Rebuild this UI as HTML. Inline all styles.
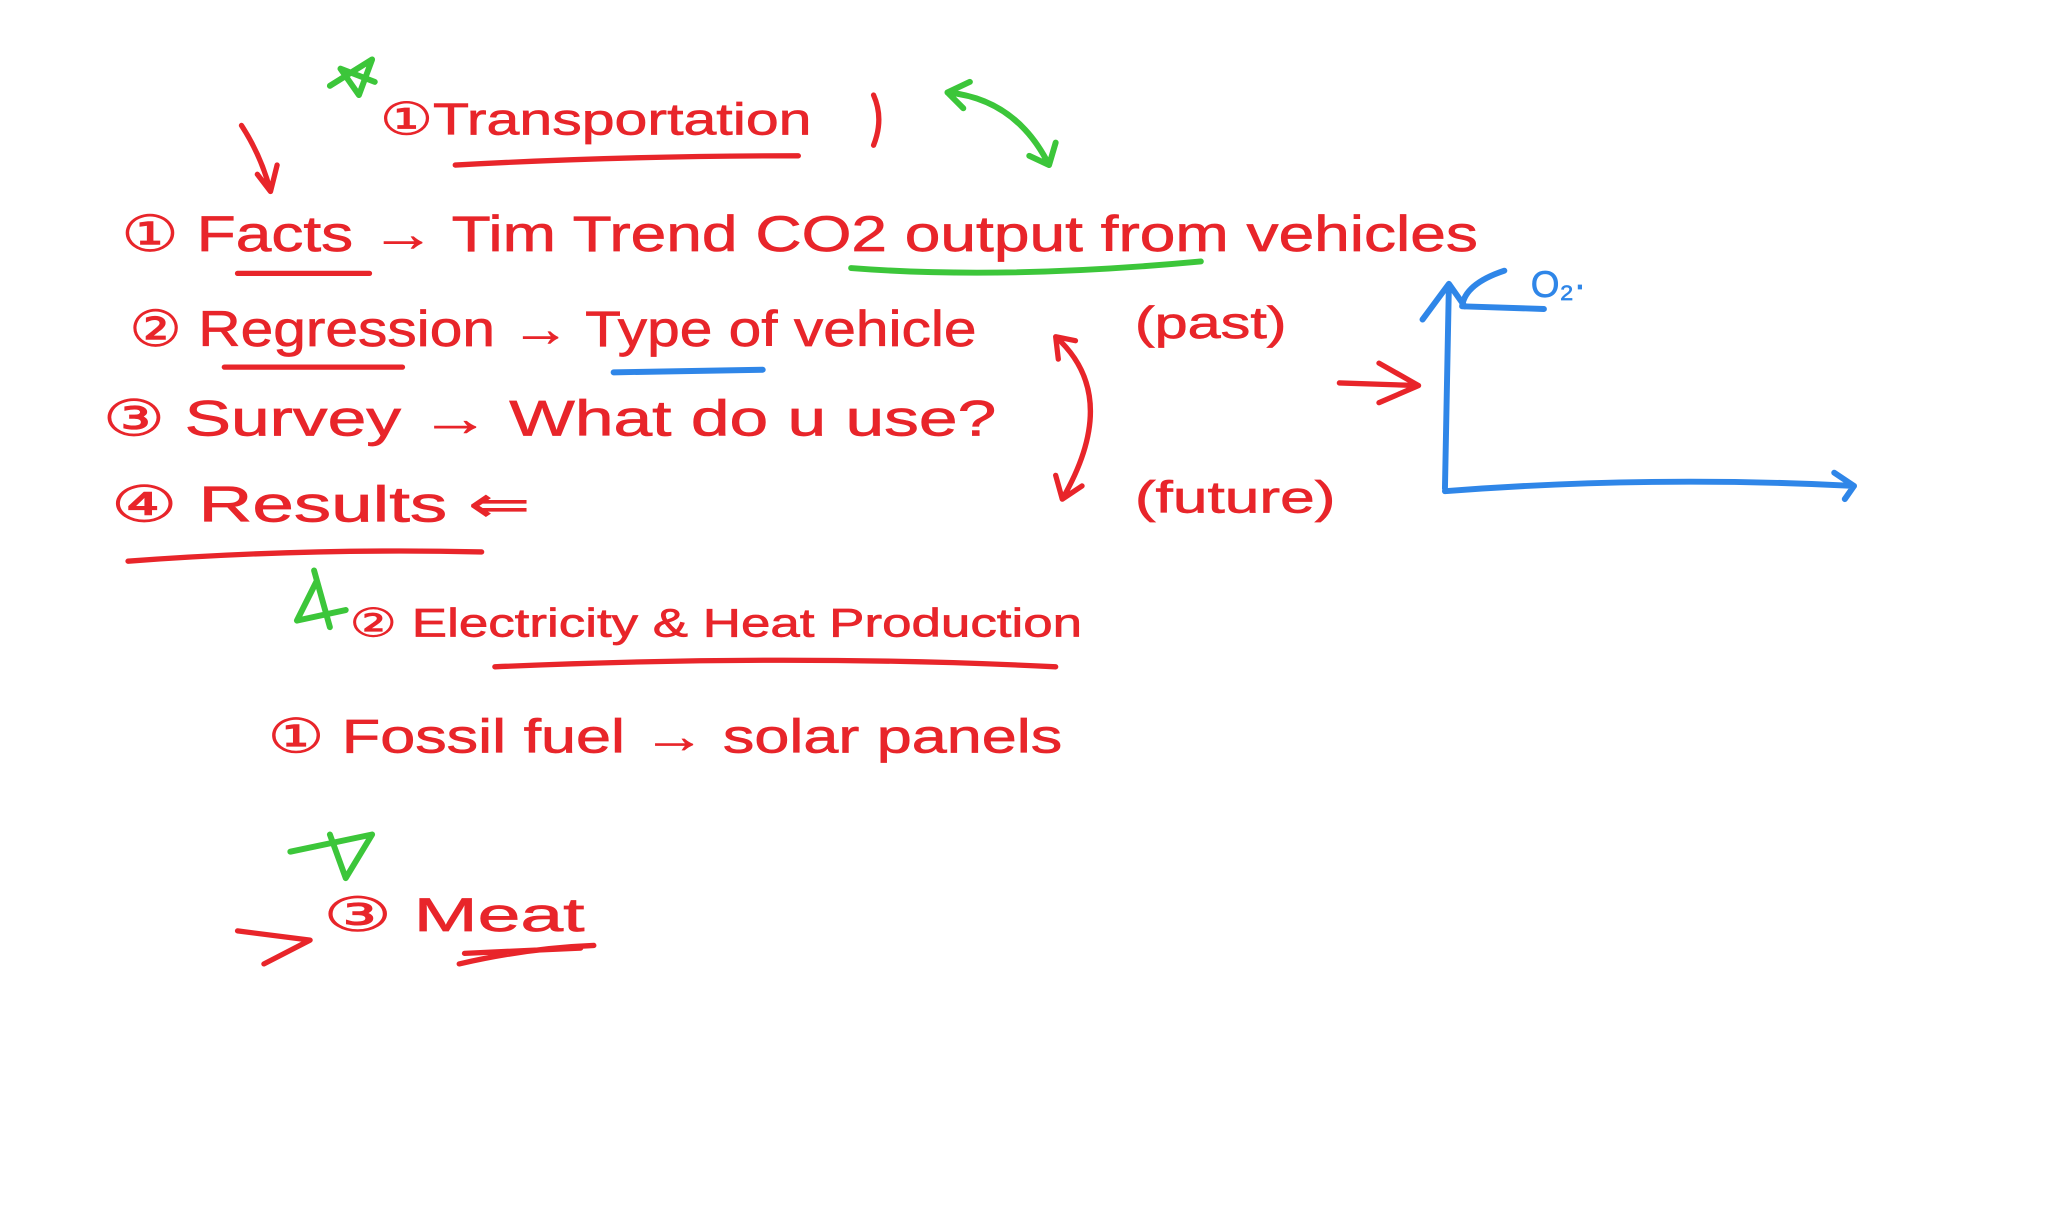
<!DOCTYPE html>
<html><head><meta charset="utf-8"><style>
html,body{margin:0;padding:0;background:#fff;width:2048px;height:1228px;overflow:hidden}
svg{display:block}
text{font-family:"Liberation Sans",sans-serif;}
.r{fill:#e8252a;stroke:#e8252a;stroke-width:0.5}
.b{fill:#2f86e8;stroke:#2f86e8;stroke-width:0.5}
.lr{fill:none;stroke:#e8252a;stroke-width:4;stroke-linecap:round;stroke-linejoin:round}
.lb{fill:none;stroke:#2f86e8;stroke-width:4.5;stroke-linecap:round;stroke-linejoin:round}
.lg{fill:none;stroke:#3cc63a;stroke-width:4.5;stroke-linecap:round;stroke-linejoin:round}
</style></head><body>
<svg width="2048" height="1228" viewBox="0 0 1552 930" preserveAspectRatio="none">
<path class="lg" d="M250 65 L282 45 L272 72 L258 52 L284 62"/>
<text class="r" x="288" y="102" font-size="34" textLength="327" lengthAdjust="spacingAndGlyphs">①Transportation</text>
<path class="lr" d="M345 125 Q470 118 605 118"/>
<path class="lr" d="M662 72 Q670 90 662 110"/>
<path class="lg" d="M718 70 Q770 75 795 125 M718 70 L735 62 M718 70 L730 82 M795 125 L780 118 M795 125 L800 108"/>
<path class="lr" d="M183 95 Q198 118 205 145 M205 145 L195 132 M205 145 L210 125"/>
<text class="r" x="92" y="190" font-size="38" textLength="1028" lengthAdjust="spacingAndGlyphs">① Facts → Tim Trend CO2 output from vehicles</text>
<path class="lr" d="M180 207 L280 207"/>
<path class="lg" d="M645 203 Q760 212 910 198"/>
<text class="r" x="98" y="262" font-size="38" textLength="642" lengthAdjust="spacingAndGlyphs">② Regression → Type of vehicle</text>
<path class="lr" d="M170 278 L305 278"/>
<path class="lb" d="M465 282 L578 280"/>
<text class="r" x="860" y="256" font-size="34" textLength="115" lengthAdjust="spacingAndGlyphs">(past)</text>
<text class="r" x="78" y="330" font-size="38" textLength="677" lengthAdjust="spacingAndGlyphs">③ Survey → What do u use?</text>
<text class="r" x="84" y="395" font-size="38" textLength="318" lengthAdjust="spacingAndGlyphs">④ Results ⇐</text>
<path class="lr" d="M97 425 Q230 415 365 418"/>
<path class="lr" d="M800 255 Q850 300 805 378 M800 255 L815 258 M800 255 L802 272 M805 378 L800 360 M805 378 L820 368"/>
<text class="r" x="860" y="388" font-size="34" textLength="152" lengthAdjust="spacingAndGlyphs">(future)</text>
<path class="lr" d="M1015 290 L1075 292 M1075 292 L1045 275 M1075 292 L1045 305"/>
<path class="lb" d="M1095 370 L1098 215 M1098 215 L1078 242 M1098 215 L1110 232 M1095 372 Q1250 360 1405 368 M1405 368 L1390 358 M1405 368 L1398 378"/>
<path class="lb" d="M1140 205 Q1110 215 1108 232 L1170 234"/>
<text class="b" x="1160" y="225" font-size="28">O₂·</text>
<path class="lg" d="M240 440 L225 470 L262 462 M238 432 L250 475"/>
<text class="r" x="265" y="482" font-size="30" textLength="555" lengthAdjust="spacingAndGlyphs">② Electricity &amp; Heat Production</text>
<path class="lr" d="M375 505 Q600 495 800 505"/>
<text class="r" x="203" y="570" font-size="36" textLength="602" lengthAdjust="spacingAndGlyphs">① Fossil fuel → solar panels</text>
<path class="lg" d="M220 645 L282 632 L262 665 L250 632"/>
<path class="lr" d="M180 705 L235 712 L200 730"/>
<text class="r" x="245" y="705" font-size="36" textLength="198" lengthAdjust="spacingAndGlyphs">③ Meat</text>
<path class="lr" d="M348 730 Q400 718 450 716 M352 722 L440 718"/>
</svg>
</body></html>
